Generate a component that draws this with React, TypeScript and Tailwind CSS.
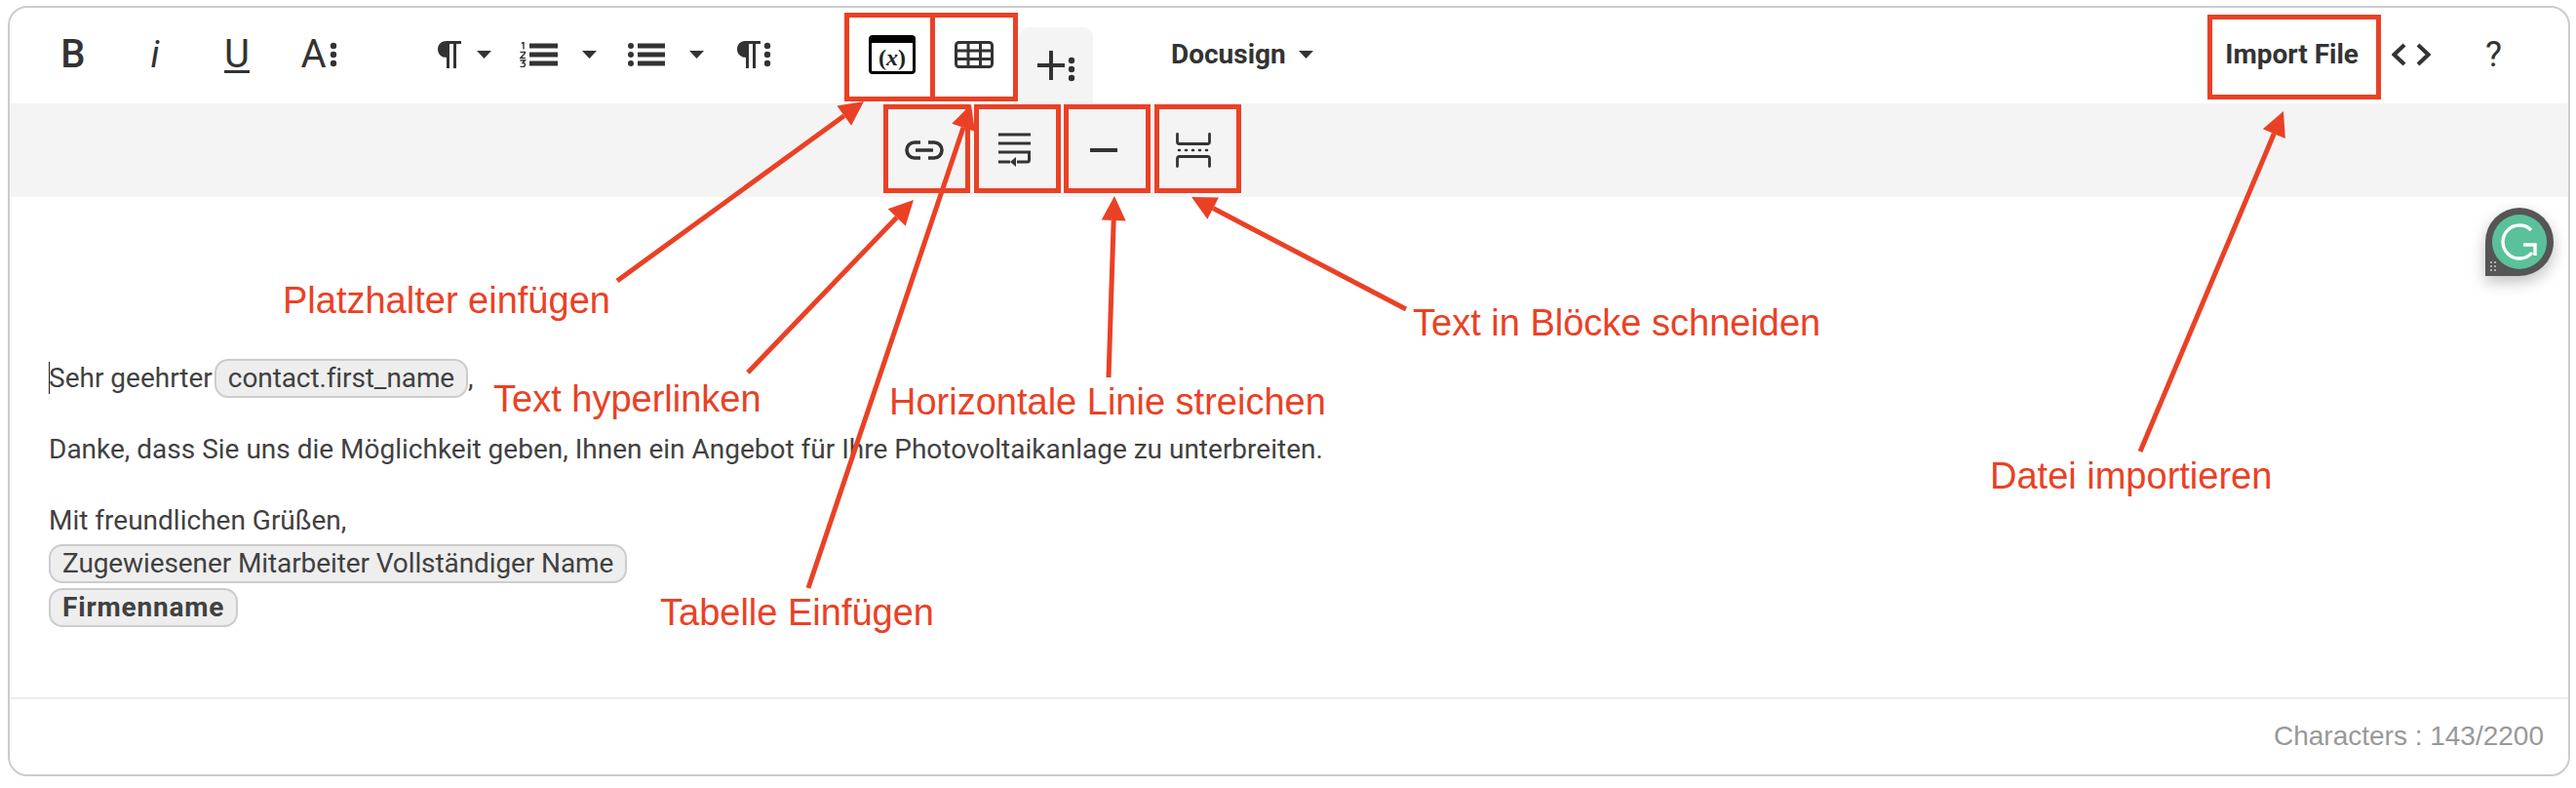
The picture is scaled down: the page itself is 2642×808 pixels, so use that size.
const Caret = ({ className = "" }: { className?: string }) => (
  <svg width="15" height="8" viewBox="0 0 15 8" className={className}>
    <path d="M0 0h15L7.5 8z" fill="#333" />
  </svg>
);

const Dots = ({ className = "" }: { className?: string }) => (
  <svg width="8" height="26" viewBox="0 0 8 26" className={`shrink-0 ${className}`}>
    <circle cx="4" cy="4" r="3.2" fill="#333" />
    <circle cx="4" cy="13" r="3.2" fill="#333" />
    <circle cx="4" cy="22" r="3.2" fill="#333" />
  </svg>
);

const Pilcrow = () => (
  <svg width="24" height="28" viewBox="0 0 24 28" className="shrink-0">
    <path d="M24 0H9C4 0 0 3.400 0 8.500S4 17 9 17V28h3V3h4v25h3V3h5z" fill="#333" />
  </svg>
);

const OrderedList = () => (
  <svg width="39" height="26" viewBox="0 0 39 26">
    <path d="M10 1.500h29v5H10zM10 10.500h29v5H10zM10 19.500h29v5H10z" fill="#333" />
    <path d="M2 1.500l2-1v7M.500 10.500h5v1L.800 16.500h5M.500 19h5L3 21.500c2 0 2.500 1 2.500 2s-.8 2-2.500 2H.500" fill="none" stroke="#333" strokeWidth="1.400" />
  </svg>
);

const BulletList = () => (
  <svg width="38" height="26" viewBox="0 0 38 26">
    <circle cx="3" cy="4" r="3" fill="#333" />
    <circle cx="3" cy="13" r="3" fill="#333" />
    <circle cx="3" cy="22" r="3" fill="#333" />
    <path d="M10 1.500h28v5H10zM10 10.500h28v5H10zM10 19.500h28v5H10z" fill="#333" />
  </svg>
);

const TableIcon = () => (
  <svg width="40" height="28" viewBox="0 0 40 28" fill="none" stroke="#333" strokeWidth="3">
    <rect x="1.500" y="1.500" width="37" height="25" rx="3" />
    <path d="M1.500 10h37M1.500 18.500h37M14 1.500v25M26.500 1.500v25" />
  </svg>
);

const LinkIcon = () => (
  <svg width="40" height="20" viewBox="0 0 40 20" fill="none" stroke="#333" strokeWidth="3.600">
    <path d="M16 2H10a8 8 0 0 0 0 16h6M24 2h6a8 8 0 0 1 0 16h-6M11 10h18" />
  </svg>
);

const WrapIcon = () => (
  <svg width="33" height="36" viewBox="0 0 33 36" fill="none" stroke="#333" strokeWidth="3">
    <path d="M0 2h33M0 11h33M0 20h33M0 30h12M31.500 20v8a2 2 0 0 1-2 2H19" />
    <path d="M18 25v10l-6-5z" fill="#333" stroke="none" />
  </svg>
);

const BreakIcon = () => (
  <svg width="36" height="36" viewBox="0 0 36 36" fill="none" stroke="#333" strokeWidth="2.800" strokeLinecap="round">
    <path d="M1.500 1.500v8a2 2 0 0 0 2 2h29a2 2 0 0 0 2-2v-8M1.500 34.500v-8a2 2 0 0 1 2-2h29a2 2 0 0 1 2 2v8" />
    <path d="M3 18h1M10 18h1M17 18h1M24 18h1M31 18h1" strokeWidth="2.600" />
  </svg>
);

const ToolButton = ({ children }: { children: React.ReactNode }) => (
  <button className="w-[84px] flex items-center justify-center text-[#333]">{children}</button>
);

function TopToolbar() {
  return (
    <div className="h-[98px] flex items-start pt-[34px] pl-[23px] font-['Roboto',sans-serif] text-[#333]">
      <div className="flex items-center h-[28px]">
        <ToolButton><span className="text-[40px] leading-none font-medium">B</span></ToolButton>
        <ToolButton><span className="text-[38px] leading-none italic">i</span></ToolButton>
        <ToolButton><span className="text-[40px] leading-none underline decoration-[3px] underline-offset-[3px]">U</span></ToolButton>
        <ToolButton>
          <span className="flex items-center gap-[3px]">
            <span className="text-[40px] leading-none">A</span>
            <Dots />
          </span>
        </ToolButton>
      </div>
      <div className="flex items-center h-[28px] ml-[80px]">
        <Pilcrow />
        <Caret className="ml-[16px]" />
        <div className="ml-[29px]"><OrderedList /></div>
        <Caret className="ml-[25px]" />
        <div className="ml-[32px]"><BulletList /></div>
        <Caret className="ml-[25px]" />
        <div className="ml-[34px] flex items-center gap-[3px]"><Pilcrow /><Dots /></div>
      </div>
      <div className="ml-[100px] -mt-[6px] w-[48px] h-[40px] shrink-0 rounded-[4px] bg-black border-[3px] border-black border-t-[8px] flex items-center justify-center">
        <span className="w-full h-full bg-white rounded-b-[1px] flex items-center justify-center font-['Liberation_Serif',serif] font-bold text-[24px] leading-none text-[#222]">
          (<i>x</i>)
        </span>
      </div>
      <div className="ml-[40px] shrink-0"><TableIcon /></div>
      <div className="ml-[26px] -mt-[14px] w-[76px] h-[78px] shrink-0 rounded-t-[10px] bg-[#f4f4f4] flex items-center justify-center gap-[3px]">
        <svg width="28" height="30" viewBox="0 0 28 30"><path d="M12 0h4v13h12v4H16v13h-4V17H0v-4h12z" fill="#333" /></svg>
        <Dots className="mt-[7px]" />
      </div>
      <div className="ml-[80px] flex items-center gap-[13px] h-[28px]">
        <span className="text-[28px] font-bold leading-none">Docusign</span>
        <Caret />
      </div>
      <div className="ml-auto flex items-center h-[28px] pr-[68px]">
        <span className="text-[28px] font-bold leading-none">Import File</span>
        <svg width="40" height="24" viewBox="0 0 40 24" fill="none" stroke="#333" strokeWidth="4" className="ml-[34px]">
          <path d="M13 2 2.500 12 13 22M27 2l10.500 10L27 22" />
        </svg>
        <span className="ml-[56px] text-[36px] leading-none">?</span>
      </div>
    </div>
  );
}

function SecondToolbar() {
  return (
    <div className="h-[96px] bg-[#f4f4f4] flex items-center pl-[892px]">
      <div className="w-[92px] flex justify-center"><LinkIcon /></div>
      <div className="w-[92px] flex justify-center"><WrapIcon /></div>
      <div className="w-[92px] flex justify-center"><div className="w-[28px] h-[4px] bg-[#333]" /></div>
      <div className="w-[92px] flex justify-center"><BreakIcon /></div>
    </div>
  );
}

const Chip = ({ children, bold = false }: { children: React.ReactNode; bold?: boolean }) => (
  <span className={`inline-flex items-center h-[40px] px-[12px] rounded-[14px] border-2 border-[#cccccc] bg-[#eeeeee] ${bold ? "font-bold tracking-[0.8px]" : "tracking-[-0.1px]"}`}>
    {children}
  </span>
);

function EditorBody() {
  return (
    <div className="h-[513px] pt-[166px] pl-[40px] font-['Roboto',sans-serif] text-[28px] leading-[40px] text-[#414141]">
      <div className="relative flex items-center h-[40px]">
        <span className="absolute left-0 top-[3px] w-[1px] h-[33px] bg-[#222]" />
        <span>Sehr geehrter</span>
        <span className="ml-[2px]"><Chip>contact.first_name</Chip></span>
        <span>,</span>
      </div>
      <p className="mt-[33px]">Danke, dass Sie uns die Möglichkeit geben, Ihnen ein Angebot für Ihre Photovoltaikanlage zu unterbreiten.</p>
      <p className="mt-[33px]">Mit freundlichen Grüßen,</p>
      <div className="mt-[4px] flex flex-col items-start gap-[5px]">
        <Chip>Zugewiesener Mitarbeiter Vollständiger Name</Chip>
        <Chip bold>Firmenname</Chip>
      </div>
    </div>
  );
}

function GrammarlyBadge() {
  return (
    <div className="absolute left-[2549px] top-[213px] w-[70px] h-[70px] rounded-full rounded-bl-[10px] bg-[#555555] shadow-[0_6px_16px_rgba(0,0,0,0.25)] flex items-center justify-center">
      <div className="w-[56px] h-[56px] rounded-full bg-[#5ac19a] flex items-center justify-center">
        <svg width="38" height="38" viewBox="0 0 38 38" fill="none" stroke="#fff" strokeWidth="3.400">
          <path d="M31 7A17 17 0 1 0 32 30" />
          <path d="M23 22H35V33" />
        </svg>
      </div>
      <span className="absolute left-[5px] bottom-[5px] grid grid-cols-2 gap-[2px]">
        <i className="w-[2px] h-[2px] bg-[#aaa]" /><i className="w-[2px] h-[2px] bg-[#aaa]" />
        <i className="w-[2px] h-[2px] bg-[#aaa]" /><i className="w-[2px] h-[2px] bg-[#aaa]" />
        <i className="w-[2px] h-[2px] bg-[#aaa]" /><i className="w-[2px] h-[2px] bg-[#aaa]" />
      </span>
    </div>
  );
}

// Draws a line with a filled head, tip at (x2, y2)
function Arrow({ x1, y1, x2, y2 }: { x1: number; y1: number; x2: number; y2: number }) {
  const a = Math.atan2(y2 - y1, x2 - x1);
  const len = 25;
  const half = 12.5;
  const bx = x2 - len * Math.cos(a);
  const by = y2 - len * Math.sin(a);
  const nx = -Math.sin(a) * half;
  const ny = Math.cos(a) * half;
  return (
    <g>
      <line x1={x1} y1={y1} x2={bx} y2={by} stroke="#ea4125" strokeWidth="5" />
      <polygon points={`${x2},${y2} ${bx + nx},${by + ny} ${bx - nx},${by - ny}`} fill="#ea4125" />
    </g>
  );
}

function Annotations() {
  return (
    <>
      <svg width="2642" height="808" viewBox="0 0 2642 808" className="absolute inset-0 pointer-events-none">
        <Arrow x1={633} y1={288} x2={886} y2={104} />
        <Arrow x1={767} y1={382} x2={937} y2={205} />
        <Arrow x1={829} y1={603} x2={996} y2={107} />
        <Arrow x1={1137} y1={387} x2={1143} y2={201} />
        <Arrow x1={1442} y1={317} x2={1222} y2={202} />
        <Arrow x1={2195} y1={463} x2={2342} y2={114} />
      </svg>
      <div className="absolute left-[866px] top-[13px] w-[93px] h-[91px] border-[5px] border-[#ea4125]" />
      <div className="absolute left-[954px] top-[13px] w-[90px] h-[91px] border-[5px] border-[#ea4125]" />
      <div className="absolute left-[906px] top-[107px] w-[89px] h-[91px] border-[5px] border-[#ea4125]" />
      <div className="absolute left-[999px] top-[107px] w-[89px] h-[91px] border-[5px] border-[#ea4125]" />
      <div className="absolute left-[1091px] top-[107px] w-[89px] h-[91px] border-[5px] border-[#ea4125]" />
      <div className="absolute left-[1184px] top-[107px] w-[89px] h-[91px] border-[5px] border-[#ea4125]" />
      <div className="absolute left-[2264px] top-[15px] w-[178px] h-[87px] border-[5px] border-[#ea4125]" />
      <div className="font-['Liberation_Sans',sans-serif] text-[38px] leading-none text-[#ea4125]">
        <span className="absolute left-[290px] top-[289px] whitespace-nowrap">Platzhalter einfügen</span>
        <span className="absolute left-[506px] top-[390px] whitespace-nowrap">Text hyperlinken</span>
        <span className="absolute left-[912px] top-[393px] whitespace-nowrap">Horizontale Linie streichen</span>
        <span className="absolute left-[1449px] top-[312px] whitespace-nowrap">Text in Blöcke schneiden</span>
        <span className="absolute left-[677px] top-[609px] whitespace-nowrap">Tabelle Einfügen</span>
        <span className="absolute left-[2041px] top-[469px] whitespace-nowrap">Datei importieren</span>
      </div>
    </>
  );
}

export default function App() {
  return (
    <div className="relative w-[2642px] h-[808px] bg-white overflow-hidden">
      <div className="ml-[8px] mr-[6px] mt-[6px] h-[790px] border-2 border-[#cccccc] rounded-[20px] overflow-hidden">
        <TopToolbar />
        <SecondToolbar />
        <EditorBody />
        <div className="border-t-2 border-[#eeeeee] h-[79px] flex items-center justify-end pr-[25px] pb-[2px] font-['Liberation_Sans',sans-serif] text-[28px] text-[#999999]">
          Characters : 143/2200
        </div>
      </div>
      <GrammarlyBadge />
      <Annotations />
    </div>
  );
}
